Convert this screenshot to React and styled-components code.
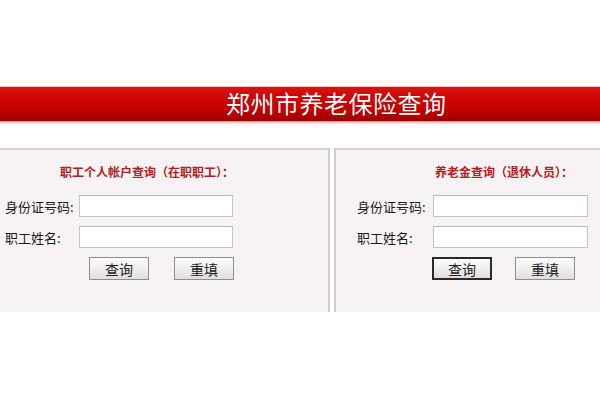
import React from "react";
import styled, { createGlobalStyle } from "styled-components";

const Global = createGlobalStyle`
  html, body { margin: 0; padding: 0; background: #fff; }
  body { font-family: "Noto Sans CJK SC", "Liberation Sans", sans-serif; }
  * { box-sizing: border-box; }
`;

const Page = styled.div`
  width: 600px;
  height: 400px;
  padding-top: 86px;
  overflow: hidden;
`;

const Banner = styled.div`
  height: 35px;
  border-top: 1px solid #f2c2c2;
  background: linear-gradient(
    to bottom,
    #d91414 0%,
    #cf0505 30%,
    #c40000 65%,
    #a80000 88%,
    #9a0000 100%
  );
  box-shadow: 0 1px 0 #e89a9a, 0 2px 0 #f4cccc, 0 3px 0 #fbe9e9;
  display: flex;
  align-items: center;
  padding-left: 226px;
`;

const BannerTitle = styled.h1`
  margin: 0;
  font-size: 24px;
  font-weight: 400;
  color: #fff;
  letter-spacing: 0.5px;
  line-height: 1;
  margin-top: -3px;
  text-shadow: 0 0 1px rgba(120, 0, 0, 0.6);
`;

const Panels = styled.div`
  margin-top: 27px;
  display: flex;
  gap: 4px;
  height: 164px;
`;

const Panel = styled.div`
  width: ${(p) => p.$w};
  flex: ${(p) => (p.$grow ? 1 : "none")};
  background: #f7f3f5;
  border-top: 2px solid #d2d2d2;
  border-left: ${(p) => (p.$left ? "2px solid #cfcfcf" : "none")};
  border-right: ${(p) => (p.$right ? "2px solid #cfcfcf" : "none")};
  padding-left: ${(p) => p.$pad};
  padding-top: 12px;
`;

const PanelTitle = styled.div`
  font-size: 12px;
  font-weight: 700;
  color: #b02222;
  height: 20px;
  line-height: 20px;
  padding-left: ${(p) => p.$indent};
  margin-bottom: 13px;
`;

const Row = styled.div`
  display: flex;
  align-items: center;
  height: 22px;
  margin-bottom: 9px;
`;

const Label = styled.label`
  width: ${(p) => p.$w};
  font-size: 13px;
  color: #1a1a1a;
  white-space: nowrap;
`;

const Input = styled.input`
  width: ${(p) => p.$w};
  height: 22px;
  border: 1px solid #c4c4c4;
  border-top-color: #b8b8b8;
  background: #fff;
  outline: none;
  margin: 0;
  padding: 0 3px;
`;

const Buttons = styled.div`
  display: flex;
  gap: ${(p) => p.$gap};
  padding-left: ${(p) => p.$indent};
  margin-top: 6px;
`;

const Button = styled.button`
  width: 60px;
  height: 23px;
  margin: 0;
  padding: 0;
  font-family: "Noto Sans CJK SC", sans-serif;
  font-size: 14px;
  line-height: 18px;
  color: #222;
  background: linear-gradient(to bottom, #fbfbfb 0%, #efefef 50%, #dedede 100%);
  border: ${(p) => (p.$default ? "2px solid #2a2a2a" : "1px solid #8e8e8e")};
  cursor: pointer;
`;

function QueryForm({ title, titleIndent, labelW, inputW, btnIndent, btnGap, defaultBtn }) {
  return (
    <>
      <PanelTitle $indent={titleIndent}>{title}</PanelTitle>
      <Row>
        <Label $w={labelW}>身份证号码:</Label>
        <Input $w={inputW} />
      </Row>
      <Row>
        <Label $w={labelW}>职工姓名:</Label>
        <Input $w={inputW} />
      </Row>
      <Buttons $indent={btnIndent} $gap={btnGap}>
        <Button $default={defaultBtn}>查询</Button>
        <Button>重填</Button>
      </Buttons>
    </>
  );
}

export default function App() {
  return (
    <>
      <Global />
      <Page>
        <Banner>
          <BannerTitle>郑州市养老保险查询</BannerTitle>
        </Banner>
        <Panels>
          <Panel $w="330px" $right $pad="5px">
            <QueryForm
              title="职工个人帐户查询（在职职工）："
              titleIndent="55px"
              labelW="74px"
              inputW="154px"
              btnIndent="84px"
              btnGap="25px"
            />
          </Panel>
          <Panel $grow $left $pad="21px">
            <QueryForm
              title="养老金查询（退休人员）："
              titleIndent="78px"
              labelW="76px"
              inputW="155px"
              btnIndent="75px"
              btnGap="23px"
              defaultBtn
            />
          </Panel>
        </Panels>
      </Page>
    </>
  );
}
